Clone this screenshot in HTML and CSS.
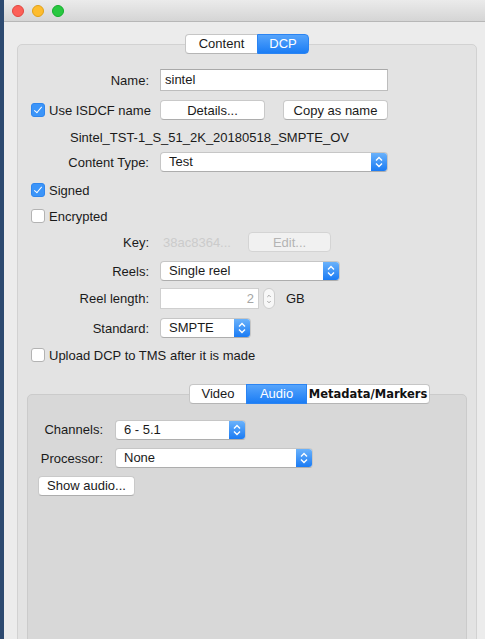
FILE: index.html
```html
<!DOCTYPE html>
<html lang="en">
<head>
  <meta charset="UTF-8">
  <title>DCP settings</title>
  <link rel="stylesheet" href="styles.css">
</head>
<body>
  <div class="desktop">
    <div class="window">
      <!-- title bar -->
      <div class="titlebar">
        <span class="light red"></span>
        <span class="light yellow"></span>
        <span class="light green"></span>
      </div>

      <div class="content">
        <div class="tabview">
          <div class="tabs">
            <span class="tab tab-content">Content</span>
            <span class="tab tab-dcp active">DCP</span>
          </div>

          <div class="panel">
            <div class="form">
              <div class="row h30">
                <span class="lbl">Name:</span>
                <div class="input name-input">sintel</div>
              </div>

              <div class="row h30">
                <label class="check lbl-check"><span class="box on"></span>Use ISDCF name</label>
                <button class="btn btn-wide">Details...</button>
                <button class="btn btn-wide btn-copy">Copy as name</button>
              </div>

              <div class="row h24 name-text">Sintel_TST-1_S_51_2K_20180518_SMPTE_OV</div>

              <div class="row h26">
                <span class="lbl">Content Type:</span>
                <div class="select sel-type"><span class="sel-text">Test</span><span class="arrows"><svg width="16" height="20" viewBox="0 0 16 20"><path d="M5 8.5 L8 5.5 L11 8.5 M5 11.5 L8 14.5 L11 11.5" fill="none" stroke="#fff" stroke-width="1.4"/></svg></span></div>
              </div>

              <div class="row h30">
                <label class="check"><span class="box on"></span>Signed</label>
              </div>

              <div class="row h22">
                <label class="check"><span class="box"></span>Encrypted</label>
              </div>

              <div class="row h30">
                <span class="lbl">Key:</span>
                <span class="key">38ac8364...</span>
                <button class="btn btn-disabled">Edit...</button>
              </div>

              <div class="row h28">
                <span class="lbl">Reels:</span>
                <div class="select sel-reels"><span class="sel-text">Single reel</span><span class="arrows"><svg width="16" height="20" viewBox="0 0 16 20"><path d="M5 8.5 L8 5.5 L11 8.5 M5 11.5 L8 14.5 L11 11.5" fill="none" stroke="#fff" stroke-width="1.4"/></svg></span></div>
              </div>

              <div class="row h27">
                <span class="lbl">Reel length:</span>
                <div class="input num-input">2</div>
                <span class="stepper"><svg width="12" height="20" viewBox="0 0 12 20"><path d="M4 7.5 L6 5.5 L8 7.5 M4 12.5 L6 14.5 L8 12.5" fill="none" stroke="#9a9a9a" stroke-width="1.1"/></svg></span>
                <span class="unit">GB</span>
              </div>

              <div class="row h32">
                <span class="lbl">Standard:</span>
                <div class="select sel-std"><span class="sel-text">SMPTE</span><span class="arrows"><svg width="16" height="20" viewBox="0 0 16 20"><path d="M5 8.5 L8 5.5 L11 8.5 M5 11.5 L8 14.5 L11 11.5" fill="none" stroke="#fff" stroke-width="1.4"/></svg></span></div>
              </div>

              <div class="row h22">
                <label class="check"><span class="box"></span>Upload DCP to TMS after it is made</label>
              </div>
            </div>

            <!-- Video / Audio / Metadata tabs -->
            <div class="tabview inner">
              <div class="tabs tabs-left">
                <span class="tab tab-video">Video</span>
                <span class="tab tab-audio active">Audio</span>
                <span class="tab tab-meta">Metadata/Markers</span>
              </div>
              <div class="panel inner-panel">
                <div class="row h29">
                  <span class="lbl lbl-small">Channels:</span>
                  <div class="select sel-chan"><span class="sel-text">6 - 5.1</span><span class="arrows"><svg width="16" height="20" viewBox="0 0 16 20"><path d="M5 8.5 L8 5.5 L11 8.5 M5 11.5 L8 14.5 L11 11.5" fill="none" stroke="#fff" stroke-width="1.4"/></svg></span></div>
                </div>
                <div class="row h28">
                  <span class="lbl lbl-small">Processor:</span>
                  <div class="select sel-proc"><span class="sel-text">None</span><span class="arrows"><svg width="16" height="20" viewBox="0 0 16 20"><path d="M5 8.5 L8 5.5 L11 8.5 M5 11.5 L8 14.5 L11 11.5" fill="none" stroke="#fff" stroke-width="1.4"/></svg></span></div>
                </div>
                <div class="row h27">
                  <button class="btn btn-show">Show audio...</button>
                </div>
              </div>
            </div>
          </div>
        </div>
      </div>
    </div>
  </div>
</body>
</html>
```

FILE: styles.css
```css
body {
  margin: 0;
  font-family: "Liberation Sans", Arial, sans-serif;
  font-size: 13px;
  color: #1a1a1a;
  background-color: #2d4a70;
}
.desktop {
  display: flex;
  height: 639px;
  padding-left: 4px;
  overflow: hidden;
}
.window {
  flex: 1;
  background-color: #ececec;
}
.titlebar {
  height: 21px;
  border-bottom: 1px solid #b7b7b7;
  background: linear-gradient(#ebebeb, #d5d5d5);
  display: flex;
  align-items: center;
  gap: 8px;
  padding-left: 8px;
}
.light {
  box-sizing: border-box;
  width: 12px;
  height: 12px;
  border-radius: 50%;
}
.red {
  background-color: #fc5f57;
  border: 0.5px solid #e2463f;
}
.yellow {
  background-color: #fdbc2e;
  border: 0.5px solid #e1a116;
}
.green {
  background-color: #28c840;
  border: 0.5px solid #14ae2c;
}
.content {
  padding: 12px 8px 0 13px;
}
.tabview {
  display: flex;
  flex-direction: column;
}
.tabs {
  display: flex;
  justify-content: center;
  margin-bottom: -10px;
  position: relative;
  z-index: 1;
}
.tabs-left {
  justify-content: flex-start;
  padding-left: 162px;
}
.tab {
  box-sizing: border-box;
  height: 20px;
  line-height: 18px;
  text-align: center;
  background-color: #fff;
  border: 1px solid #c6c6c6;
  border-bottom-color: #b5b5b5;
}
.tab + .tab {
  margin-left: -1px;
}
.tab:first-child {
  border-radius: 4px 0 0 4px;
}
.tab:last-child {
  border-radius: 0 4px 4px 0;
}
.tab.active {
  color: #fff;
  background: linear-gradient(#56a4fb, #1b7df5);
  border-color: #2b84f2;
  position: relative;
}
.tab-content { width: 73px; }
.tab-dcp { width: 52px; }
.tab-video { width: 58px; }
.tab-audio { width: 61px; }
.tab-meta {
  width: 124px;
  font-family: "DejaVu Sans", sans-serif;
  font-weight: bold;
  font-size: 11.5px;
  color: #111;
}
.panel {
  background-color: #e3e3e3;
  border: 1px solid #d2d2d2;
  border-radius: 5px;
  padding-top: 20px;
  min-height: 600px;
}
.form {
  padding-left: 13px;
}
.row {
  display: flex;
  align-items: center;
  height: 28px;
}
.h22 { height: 22px; }
.h24 { height: 24px; }
.h26 { height: 26px; }
.h27 { height: 27px; }
.h28 { height: 28px; }
.h29 { height: 29px; }
.h30 { height: 30px; }
.h32 { height: 32px; }
.lbl {
  width: 118px;
  margin-right: 11px;
  text-align: right;
}
.lbl-small {
  width: 65px;
  margin-right: 12px;
}
.check {
  display: flex;
  align-items: center;
  gap: 4px;
}
.lbl-check {
  width: 129px;
}
.box {
  width: 12px;
  height: 12px;
  border: 1px solid #b3b3b3;
  border-radius: 3px;
  background-color: #fff;
  position: relative;
}
.box.on {
  background: #3c95f9;
  border-color: #2f86ee;
}
.box.on::after {
  content: "";
  position: absolute;
  left: 4px;
  top: 1px;
  width: 3px;
  height: 7px;
  border: solid #fff;
  border-width: 0 1.5px 1.5px 0;
  transform: rotate(40deg);
}
.input {
  height: 20px;
  line-height: 20px;
  background-color: #fff;
  border: 1px solid #bdbdbd;
  border-top-color: #a9a9a9;
  padding: 0 4px;
}
.name-input {
  width: 218px;
}
.num-input {
  height: 19px;
  line-height: 19px;
  width: 89px;
  text-align: right;
  color: #a5a5a5;
  border-color: #cfcfcf;
}
.btn {
  height: 20px;
  padding: 0;
  font-family: inherit;
  font-size: 13px;
  color: #1a1a1a;
  background-color: #fff;
  border: 1px solid #c9c9c9;
  border-bottom-color: #adadad;
  border-radius: 4px;
}
.btn-wide {
  width: 105px;
}
.btn-copy {
  margin-left: 18px;
}
.btn-disabled {
  width: 83px;
  color: #b4b4b4;
  background-color: #f1f1f1;
  border-color: #d4d4d4;
}
.btn-show {
  width: 97px;
}
.name-text {
  width: 357px;
  justify-content: center;
}
.key {
  width: 85px;
  padding-left: 3px;
  color: #cbcbcb;
}
.select {
  display: flex;
  height: 18px;
  background-color: #fff;
  border: 1px solid #c6c6c6;
  border-bottom-color: #adadad;
  border-radius: 4px;
  overflow: hidden;
}
.sel-text {
  flex: 1;
  padding-left: 8px;
  line-height: 18px;
}
.arrows {
  width: 16px;
  display: flex;
  align-items: center;
  justify-content: center;
  background: linear-gradient(#6ab2fb, #1a7bf4);
}
.sel-type { width: 226px; }
.sel-reels { width: 178px; }
.sel-std { width: 89px; }
.sel-chan { width: 129px; }
.sel-proc { width: 196px; }
.stepper {
  width: 10px;
  height: 19px;
  margin-left: 4px;
  border: 1px solid #cdcdcd;
  border-radius: 6px;
  background-color: #f7f7f7;
  display: flex;
  align-items: center;
  justify-content: center;
}
.unit {
  margin-left: 11px;
}
.inner {
  margin: 18px 9px 0 9px;
}
.inner-panel {
  background-color: #d8d8d8;
  border-color: #cbcbcb;
  padding-left: 10px;
  padding-top: 20px;
}
```
